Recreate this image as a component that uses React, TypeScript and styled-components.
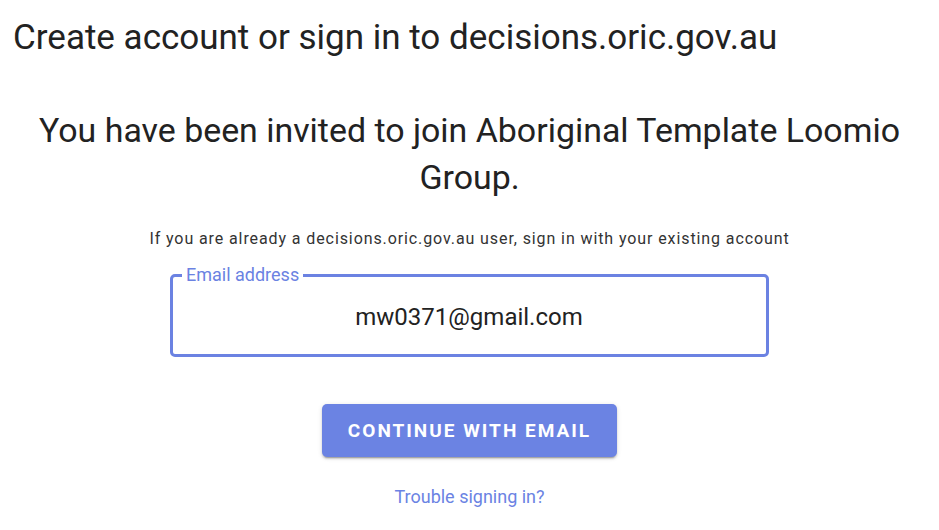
import React from "react";
import styled, { createGlobalStyle } from "styled-components";

const Global = createGlobalStyle`
  html, body { margin: 0; padding: 0; background: #ffffff; }
  body { font-family: Roboto, "Noto Sans", Arial, sans-serif; color: rgba(0,0,0,0.87); }
  * { box-sizing: border-box; }
`;

const Page = styled.div`
  width: 939px;
  height: 530px;
  overflow: hidden;
  display: flex;
  flex-direction: column;
`;

const Title = styled.h1`
  margin: 0;
  padding: 16px 0 0 13px;
  font-size: 35px;
  font-weight: 400;
  line-height: 44px;
  color: #222222;
`;

const Body = styled.div`
  display: flex;
  flex-direction: column;
  align-items: center;
  padding-top: 47px;
`;

const Invite = styled.h2`
  margin: 0;
  width: 880px;
  text-align: center;
  font-size: 33.9px;
  font-weight: 400;
  line-height: 47px;
  color: #222222;
`;

const Hint = styled.p`
  margin: 28px 0 0;
  font-size: 16px;
  line-height: 20px;
  letter-spacing: 0.9px;
  color: #333333;
  text-align: center;
`;

const Field = styled.fieldset`
  margin: 17px 0 0;
  width: 599px;
  height: 91px;
  border: 3px solid #6b82e2;
  border-radius: 5px;
  padding: 0 10px 0 9px;
  min-width: 0;
`;

const Legend = styled.legend`
  padding: 0 4px;
  font-size: 18px;
  line-height: 18px;
  color: #6b82e2;
`;

const Input = styled.input`
  display: block;
  width: 100%;
  height: 28px;
  margin: 19px 0 0;
  padding: 0;
  border: none;
  outline: none;
  background: transparent;
  text-align: center;
  font-family: Roboto, "Noto Sans", Arial, sans-serif;
  font-size: 24px;
  line-height: 28px;
  color: #222222;
  caret-color: #6b82e2;
`;

const Button = styled.button`
  margin-top: 47px;
  width: 295px;
  height: 53px;
  border: none;
  border-radius: 5px;
  background: #6b83e3;
  color: #ffffff;
  font-family: Roboto, "Noto Sans", Arial, sans-serif;
  font-size: 19px;
  font-weight: 700;
  letter-spacing: 2px;
  text-transform: uppercase;
  box-shadow: 0 3px 1px -2px rgba(0,0,0,0.2), 0 2px 2px 0 rgba(0,0,0,0.14), 0 1px 5px 0 rgba(0,0,0,0.12);
  cursor: pointer;
`;

const Link = styled.a`
  margin-top: 29px;
  font-size: 18px;
  line-height: 22px;
  color: #6b83e3;
  text-decoration: none;
`;

export default function App() {
  return (
    <Page>
      <Global />
      <Title>Create account or sign in to decisions.oric.gov.au</Title>
      <Body>
        <Invite>You have been invited to join Aboriginal Template Loomio Group.</Invite>
        <Hint>If you are already a decisions.oric.gov.au user, sign in with your existing account</Hint>
        <Field>
          <Legend>Email address</Legend>
          <Input defaultValue="mw0371@gmail.com" spellCheck={false} />
        </Field>
        <Button>Continue with email</Button>
        <Link href="#">Trouble signing in?</Link>
      </Body>
    </Page>
  );
}
